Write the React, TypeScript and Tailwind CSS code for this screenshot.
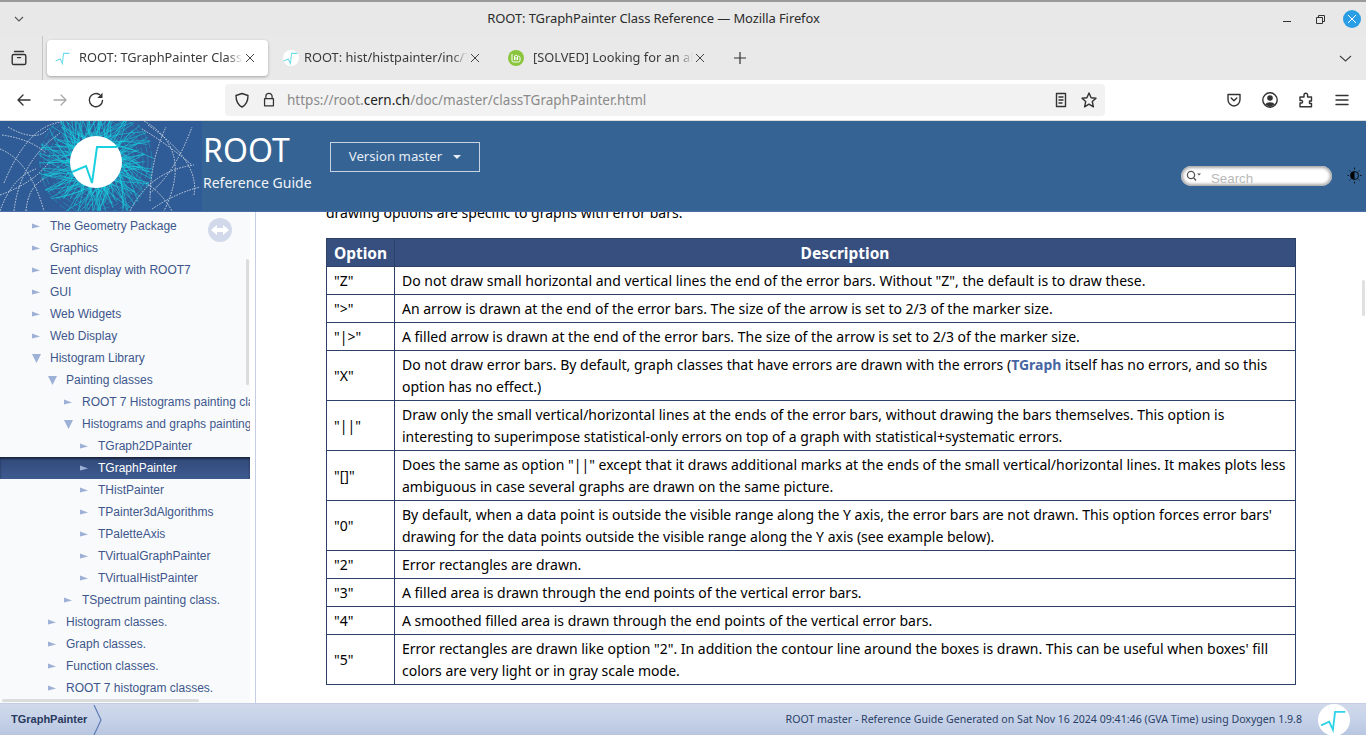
import React from "react";

const ui = "font-['Noto_Sans',sans-serif]";

function RootMark({ size = 16, stroke = "#2dd4e8", width = 3.4 }: { size?: number; stroke?: string; width?: number }) {
  return (
    <svg width={size} height={size} viewBox="0 0 52 52">
      <path d="M2 36 L17 29 L24 44 L28 11 L47 11" fill="none" stroke={stroke} strokeWidth={width} />
    </svg>
  );
}

function seeded(i: number, m: number) {
  return ((i * 7919 + 13) * (i + 3)) % m;
}

function Banner() {
  const cx = 96;
  const cy = 41;
  const cyan = Array.from({ length: 230 }, (_, i) => {
    const a = (i / 230) * Math.PI * 2;
    const r2 = 30 + seeded(i, 36);
    const bend = 0.25 + (seeded(i, 10) / 10) * 0.8 * (i % 2 ? 1 : -1);
    const mx = cx + Math.cos(a + bend) * r2 * 0.6;
    const my = cy + Math.sin(a + bend) * r2 * 0.6;
    const ex = cx + Math.cos(a + bend * 1.5) * r2;
    const ey = cy + Math.sin(a + bend * 1.5) * r2;
    return (
      <path key={i} d={`M${cx + Math.cos(a) * 20} ${cy + Math.sin(a) * 20} Q${mx} ${my} ${ex} ${ey}`} fill="none" stroke="#17cfe0" strokeWidth="0.7" opacity="0.85" />
    );
  });
  const rings = [30, 34, 38, 43, 47, 52, 56].map((r) => (
    <circle key={r} cx={cx} cy={cy} r={r} fill="none" stroke="#19b9d2" strokeWidth="0.6" strokeDasharray="7 3" opacity="0.7" />
  ));
  return (
    <svg width="202" height="90" viewBox="0 0 202 90" className="shrink-0 block">
      <rect width="202" height="90" fill="#2f5b96" />
      <g fill="none" stroke="#eef3f5" strokeWidth="1" strokeDasharray="1.6 1.2" opacity="0.8">
        <path d="M4 62 Q28 4 62 1" />
        <path d="M0 28 Q30 40 44 90" />
        <path d="M14 90 Q20 40 60 12" />
        <path d="M0 74 Q34 62 50 40" />
        <path d="M8 6 Q36 22 48 8" />
        <path d="M2 14 Q30 18 46 32" />
        <path d="M0 90 Q12 56 36 48" />
        <path d="M26 90 Q28 66 44 58" />
        <path d="M144 0 Q194 28 164 90" />
        <path d="M148 4 Q200 40 194 74" />
        <path d="M130 90 Q150 50 194 44" />
        <path d="M150 72 Q175 52 192 6" />
        <path d="M152 88 Q176 72 200 66" />
        <path d="M146 62 Q162 72 172 90" />
        <path d="M142 8 Q166 22 192 44" />
        <path d="M150 80 Q150 40 166 6" />
      </g>
      {rings}
      {cyan}
      <circle cx={cx} cy={cy} r="26" fill="#ffffff" />
      <path d="M72 51 L86 45 L92 62 L97 26 L117 26" fill="none" stroke="#19cfe0" strokeWidth="2" />
    </svg>
  );
}

function Tri({ open }: { open?: boolean }) {
  return open ? (
    <svg width="12" height="12" viewBox="0 0 12 12" className="shrink-0"><path d="M0 2 H9 L4.5 11 Z" fill="#9db0d6" /></svg>
  ) : (
    <svg width="12" height="12" viewBox="0 0 12 12" className="shrink-0"><path d="M0 3.5 L8 6.5 L0 8.5 Z" fill="#9db0d6" /></svg>
  );
}

const tree: [string, number, boolean?, boolean?][] = [
  ["The Geometry Package", 0],
  ["Graphics", 0],
  ["Event display with ROOT7", 0],
  ["GUI", 0],
  ["Web Widgets", 0],
  ["Web Display", 0],
  ["Histogram Library", 0, true],
  ["Painting classes", 1, true],
  ["ROOT 7 Histograms painting classes", 2],
  ["Histograms and graphs painting classes", 2, true],
  ["TGraph2DPainter", 3],
  ["TGraphPainter", 3, false, true],
  ["THistPainter", 3],
  ["TPainter3dAlgorithms", 3],
  ["TPaletteAxis", 3],
  ["TVirtualGraphPainter", 3],
  ["TVirtualHistPainter", 3],
  ["TSpectrum painting class.", 2],
  ["Histogram classes.", 1],
  ["Graph classes.", 1],
  ["Function classes.", 1],
  ["ROOT 7 histogram classes.", 1],
];

const indents: Record<number, string> = { 0: "pl-[32px]", 1: "pl-[48px]", 2: "pl-[64px]", 3: "pl-[80px]" };

function Sidebar() {
  return (
    <div className="relative w-[256px] shrink-0 bg-white border-r border-[#c4cfe5] overflow-hidden">
      <div className="w-[250px] h-full bg-[#f9fafc] pt-[3px] overflow-hidden font-['Liberation_Sans',sans-serif] text-[12px]">
        {tree.map(([t, lvl, open, sel]) => (
          <div key={t} className={`h-[22px] flex items-center whitespace-nowrap ${indents[lvl]} ${sel ? "bg-gradient-to-b from-[#32497a] to-[#3d5a8f] text-white shadow-[inset_0_2px_2px_#1c2740]" : "text-[#3d578c]"}`}>
            <span className="w-[18px] flex shrink-0"><Tri open={open} /></span>
            <span className="shrink-0">{t}</span>
          </div>
        ))}
      </div>
      <div className="absolute left-[208px] top-[6px] w-[24px] h-[24px] rounded-full bg-[#d2d9ea] flex items-center justify-center">
        <svg width="18" height="10" viewBox="0 0 18 10"><path d="M0 5 L6 0 V3 H12 V0 L18 5 L12 10 V7 H6 V10 Z" fill="#ffffff" /></svg>
      </div>
      <div className="absolute left-[246px] top-[47px] w-[3px] h-[126px] bg-[#dcdcdc] rounded" />
      <div className="absolute left-[2px] bottom-[1px] w-[197px] h-[3px] bg-[#dcdcdc] rounded" />
    </div>
  );
}

const rows: [string, React.ReactNode][] = [
  ['"Z"', 'Do not draw small horizontal and vertical lines the end of the error bars. Without "Z", the default is to draw these.'],
  ['">"', "An arrow is drawn at the end of the error bars. The size of the arrow is set to 2/3 of the marker size."],
  ['"|>"', "A filled arrow is drawn at the end of the error bars. The size of the arrow is set to 2/3 of the marker size."],
  ['"X"', <>Do not draw error bars. By default, graph classes that have errors are drawn with the errors (<b className="font-bold text-[#4665a2]">TGraph</b> itself has no errors, and so this option has no effect.)</>],
  ['"||"', 'Draw only the small vertical/horizontal lines at the ends of the error bars, without drawing the bars themselves. This option is interesting to superimpose statistical-only errors on top of a graph with statistical+systematic errors.'],
  ['"[]"', 'Does the same as option "||" except that it draws additional marks at the ends of the small vertical/horizontal lines. It makes plots less ambiguous in case several graphs are drawn on the same picture.'],
  ['"0"', "By default, when a data point is outside the visible range along the Y axis, the error bars are not drawn. This option forces error bars' drawing for the data points outside the visible range along the Y axis (see example below)."],
  ['"2"', "Error rectangles are drawn."],
  ['"3"', "A filled area is drawn through the end points of the vertical error bars."],
  ['"4"', "A smoothed filled area is drawn through the end points of the vertical error bars."],
  ['"5"', "Error rectangles are drawn like option \"2\". In addition the contour line around the boxes is drawn. This can be useful when boxes' fill colors are very light or in gray scale mode."],
];

function TabX({ c = "#444" }: { c?: string }) {
  return (
    <svg width="10" height="10" viewBox="0 0 10 10" className="shrink-0"><path d="M1 1 L9 9 M9 1 L1 9" stroke={c} strokeWidth="1" /></svg>
  );
}

function Tab({ icon, title, active, gap }: { icon: React.ReactNode; title: string; active?: boolean; gap: string }) {
  return (
    <div className={`w-[221px] h-[36px] flex items-center pl-[8px] pr-[13px] shrink-0 rounded-[4px] ${active ? "bg-white shadow-[0_1px_3px_rgba(0,0,0,0.3)]" : ""}`}>
      {icon}
      <span className={`${gap} flex-1 min-w-0 overflow-hidden whitespace-nowrap text-[12.8px] text-[#3a3a3a] [mask-image:linear-gradient(to_right,black_90%,transparent)]`}>{title}</span>
      <span className="ml-[2px]"><TabX /></span>
    </div>
  );
}

function Ico({ children, w = 18 }: { children: React.ReactNode; w?: number }) {
  return (
    <svg width={w} height={w} viewBox="0 0 18 18" fill="none" stroke="#333" strokeWidth="1.4" strokeLinejoin="round" strokeLinecap="round" className="shrink-0">{children}</svg>
  );
}

export default function App() {
  return (
    <div className={`w-[1366px] h-[735px] overflow-hidden flex flex-col bg-white relative ${ui}`}>
      {/* title bar */}
      <div className="h-[36px] shrink-0 bg-[#e8e8e8] border-t-[2px] border-[#9a9a9a] flex items-center pl-[14px] pr-[5px] relative">
        <svg width="10" height="6" viewBox="0 0 10 6" className="shrink-0"><path d="M1 1 L5 5 L9 1" fill="none" stroke="#555" strokeWidth="1.1" /></svg>
        <div className="flex-1 text-center text-[13px] text-[#2c2c2c] tracking-[-0.1px]">ROOT: TGraphPainter Class Reference — Mozilla Firefox</div>
        <div className="flex items-center">
          <div className="w-[8px] h-[1px] bg-[#333] mt-[4px]" />
          <svg width="9" height="9" viewBox="0 0 9 9" className="shrink-0 ml-[25px]"><path d="M2.5 2 V0.5 H8.5 V6.5 H7 M0.5 2.5 H6.5 V8.5 H0.5 Z" fill="none" stroke="#333" strokeWidth="1" /></svg>
          <div className="w-[18px] h-[18px] rounded-full bg-[#2a9ee4] flex items-center justify-center ml-[18px]"><TabX c="#ffffff" /></div>
        </div>
      </div>
      {/* tab bar */}
      <div className="h-[44px] shrink-0 bg-[#e9e9e9] flex items-center relative">
        <div className="w-[43px] h-full flex items-center justify-center border-r border-[#c4c4c4] shrink-0 pr-[4px]">
          <svg width="18" height="18" viewBox="0 0 18 18" fill="none" stroke="#333" strokeWidth="1.4" strokeLinecap="round" className="shrink-0">
            <path d="M4.5 2.5 H13.5" />
            <rect x="2.2" y="5.5" width="13.6" height="10" rx="1.6" />
            <path d="M7.5 8.6 H10.5" />
          </svg>
        </div>
        <div className="flex items-center gap-[4px] ml-[4px]">
          <Tab active gap="ml-[8px]" title="ROOT: TGraphPainter Class Reference" icon={<span className="w-[16px] h-[16px] flex items-center justify-center shrink-0"><RootMark stroke="#6fdcea" /></span>} />
          <Tab gap="ml-[5px]" title="ROOT: hist/histpainter/inc/TGraphPainter.h" icon={<span className="w-[16px] h-[16px] rounded-full bg-white flex items-center justify-center ml-[3px] shrink-0"><RootMark stroke="#6fdcea" /></span>} />
          <Tab gap="ml-[9px]" title="[SOLVED] Looking for an alternative" icon={<span className="w-[16px] h-[16px] rounded-full bg-[#8ac53e] flex items-center justify-center ml-[3px] shrink-0">
            <svg width="10" height="10" viewBox="0 0 10 10" fill="none" stroke="#ffffff" strokeWidth="1"><path d="M1 1 V7.5 Q1 9 2.5 9 H7.5 Q9 9 9 7.5 V4.5 A1.5 1.5 0 0 0 6.5 3.5 A1.2 1.2 0 0 0 3.5 4 V7 M5 4 V7 M6.5 4 V7" /></svg>
          </span>} />
        </div>
        <div className="ml-[15px]">
          <svg width="14" height="14" viewBox="0 0 14 14" className="block"><path d="M7 1 V13 M1 7 H13" stroke="#333" strokeWidth="1.2" /></svg>
        </div>
        <div className="ml-auto mr-[14px]">
          <svg width="13" height="7" viewBox="0 0 13 7" className="block"><path d="M1 1 L6.5 6 L12 1" fill="none" stroke="#444" strokeWidth="1.1" /></svg>
        </div>
      </div>
      {/* nav bar */}
      <div className="h-[41px] shrink-0 bg-white flex items-center border-b border-[#dcdcdc]">
        <div className="flex items-center gap-[18px] pl-[15px] w-[225px] shrink-0">
          <Ico><path d="M15 9 H3 M8 4 L3 9 L8 14" /></Ico>
          <svg width="18" height="18" viewBox="0 0 18 18" fill="none" stroke="#a8a8a8" strokeWidth="1.3" strokeLinecap="round" strokeLinejoin="round"><path d="M3 9 H15 M10 4 L15 9 L10 14" /></svg>
          <svg width="18" height="18" viewBox="0 0 18 18" fill="none" className="shrink-0">
            <path d="M15.5 9.5 A6.6 6.6 0 1 1 12.5 3.6" stroke="#333" strokeWidth="1.4" strokeLinecap="round" />
            <path d="M15.5 1.8 V7 H10.3 Z" fill="#333" />
          </svg>
        </div>
        <div className="w-[880px] h-[32px] bg-[#f2f2f2] rounded-[4px] flex items-center pl-[8px] pr-[7px] shrink-0">
          <Ico><path d="M9 2.5 L15 4.5 C15 10 13 14 9 16 C5 14 3 10 3 4.5 Z" /></Ico>
          <span className="ml-[10px]"><Ico w={16}><path d="M5.5 7.5 V5 A3.5 3.5 0 0 1 12.5 5 V7.5 M4 7.5 H14 V15.5 H4 Z" /></Ico></span>
          <span className="ml-[10px] text-[13.5px] text-[#8a8a8a] whitespace-nowrap">https://root.<span className="text-[#222]">cern.ch</span>/doc/master/classTGraphPainter.html</span>
          <span className="ml-auto flex items-center gap-[10px]">
            <Ico><path d="M4.5 2.5 H13.5 V15.5 H4.5 Z M7 6 H11 M7 9 H11 M7 12 H10" /></Ico>
            <Ico><path d="M9 2 L11.1 6.7 L16 7.2 L12.3 10.6 L13.4 15.8 L9 13.2 L4.6 15.8 L5.7 10.6 L2 7.2 L6.9 6.7 Z" /></Ico>
          </span>
        </div>
        <div className="ml-auto flex items-center gap-[18px] pr-[15px]">
          <Ico><path d="M3 3.5 H15 V8.5 A6 6.5 0 0 1 3 8.5 Z M6.2 7 L9 9.8 L11.8 7" /></Ico>
          <svg width="18" height="18" viewBox="0 0 18 18" className="shrink-0"><circle cx="9" cy="9" r="7.2" fill="none" stroke="#333" strokeWidth="1.4" /><circle cx="9" cy="7" r="2.8" fill="#333" /><path d="M4 13.5 A5.5 4 0 0 1 14 13.5 L9 16 Z" fill="#333" /></svg>
          <Ico><path d="M3 6 H7 V4 A1.8 1.8 0 0 1 10.6 4 V6 H14.5 V10 H12.5 V12.5 H14.5 V15.8 H3 V12 H5 A1.6 1.6 0 0 0 5 9.5 H3 Z" /></Ico>
          <Ico><path d="M3 4.5 H15 M3 9 H15 M3 13.5 H15" /></Ico>
        </div>
      </div>
      {/* doxygen header */}
      <div className="h-[91px] shrink-0 bg-[#356394] border-b border-[#4a6fa8] flex text-white relative z-10">
        <Banner />
        <div className="w-[128px] shrink-0 pl-[1px]">
          <div className="text-[32px] leading-[42px] mt-[8px] font-normal">ROOT</div>
          <div className="text-[14px] leading-[20px] mt-[2px] text-[#f0f4f8]">Reference Guide</div>
        </div>
        <div className="w-[150px] h-[30px] mt-[21px] border border-[#c6d3e2] flex items-center justify-center text-[13.2px] text-[#e6edf5] gap-[11px] shrink-0">
          <span>Version master</span>
          <span className="w-0 h-0 border-x-[4px] border-x-transparent border-t-[4px] border-t-[#e6edf5]" />
        </div>
        <div className="ml-auto flex items-start pr-[4px] pt-[45px]">
          <div className="w-[151px] h-[20px] rounded-full bg-white shadow-[inset_0_0_3px_2px_#a9a9a9] flex items-center pl-[5px] text-[#b8b8b8] font-['Liberation_Sans',sans-serif] text-[13.3px]">
            <svg width="16" height="12" viewBox="0 0 16 12" className="shrink-0"><circle cx="5" cy="5" r="3.6" fill="none" stroke="#555" strokeWidth="1.3" /><path d="M7.8 8 L10 10.5" stroke="#555" strokeWidth="1.4" /><path d="M11 3.5 H15 L13 5.5 Z" fill="#555" /></svg>
            <span className="ml-[9px] mt-[6px]">Search</span>
          </div>
          <div className="ml-[15px] mt-[1px]">
            <svg width="15" height="17" viewBox="0 0 15 17" className="block"><circle cx="7.5" cy="8.5" r="4" fill="#000" /><path d="M7.5 4.5 A4 4 0 0 1 7.5 12.5 Z" fill="#356394" /><circle cx="7.5" cy="8.5" r="4" fill="none" stroke="#000" strokeWidth="0.8" /><path d="M7.5 0.5 V2.5 M7.5 14.5 V16.5 M0.5 8.5 H2 M13 8.5 H14.5 M2.5 3.5 L3.5 4.5 M11.5 12.5 L12.5 13.5 M12.5 3.5 L11.5 4.5 M3.5 12.5 L2.5 13.5" stroke="#000" strokeWidth="0.8" /></svg>
          </div>
        </div>
      </div>
      {/* body */}
      <div className="flex-1 min-h-0 flex">
        <Sidebar />
        <div className="flex-1 min-w-0 overflow-hidden pl-[70px] font-['Noto_Sans',sans-serif] text-[14px] leading-[22px] text-black">
          <p className="-mt-[10px] h-[36px] whitespace-nowrap">drawing options are specific to graphs with error bars.</p>
          <table className="w-[970px] border-collapse table-fixed">
            <thead>
              <tr className="h-[28px] bg-[#374f7f] text-white text-[15.5px] font-bold">
                <th className="border border-[#2d4068] w-[68px] font-bold">Option</th>
                <th className="border border-[#2d4068] font-bold">Description</th>
              </tr>
            </thead>
            <tbody>
              {rows.map(([o, d], i) => (
                <tr key={i}>
                  <td className="border border-[#2d4068] px-[7px] py-[2.5px] align-middle">{o}</td>
                  <td className="border border-[#2d4068] px-[7px] py-[2.5px] align-middle">{d}</td>
                </tr>
              ))}
            </tbody>
          </table>
        </div>
      </div>
      {/* page scrollbar */}
      <div className="absolute left-[1362px] top-[280px] w-[3px] h-[36px] bg-[#e0e0e0] rounded" />
      {/* footer */}
      <div className="h-[32px] shrink-0 border-t border-[#c4cfe5] bg-gradient-to-b from-[#d0d9eb] via-[#c6d2e8] to-[#b8c6e0] flex items-center relative">
        <div className="flex items-center h-full font-['Liberation_Sans',sans-serif] text-[11px] font-bold text-[#283a5d] pl-[11px]">
          <span>TGraphPainter</span>
          <svg width="10" height="30" viewBox="0 0 10 30" className="ml-[6px]"><path d="M1 0 L8 15 L1 30" fill="none" stroke="#5f7cb4" strokeWidth="1.2" /></svg>
        </div>
        <div className="ml-auto text-[10.6px] text-[#2a3f66] mr-[16px]">ROOT master - Reference Guide Generated on Sat Nov 16 2024 09:41:46 (GVA Time) using Doxygen 1.9.8</div>
        <div className="w-[32px] h-[32px] rounded-full bg-white flex items-center justify-center mr-[16px] shrink-0"><RootMark size={28} /></div>
      </div>
    </div>
  );
}
